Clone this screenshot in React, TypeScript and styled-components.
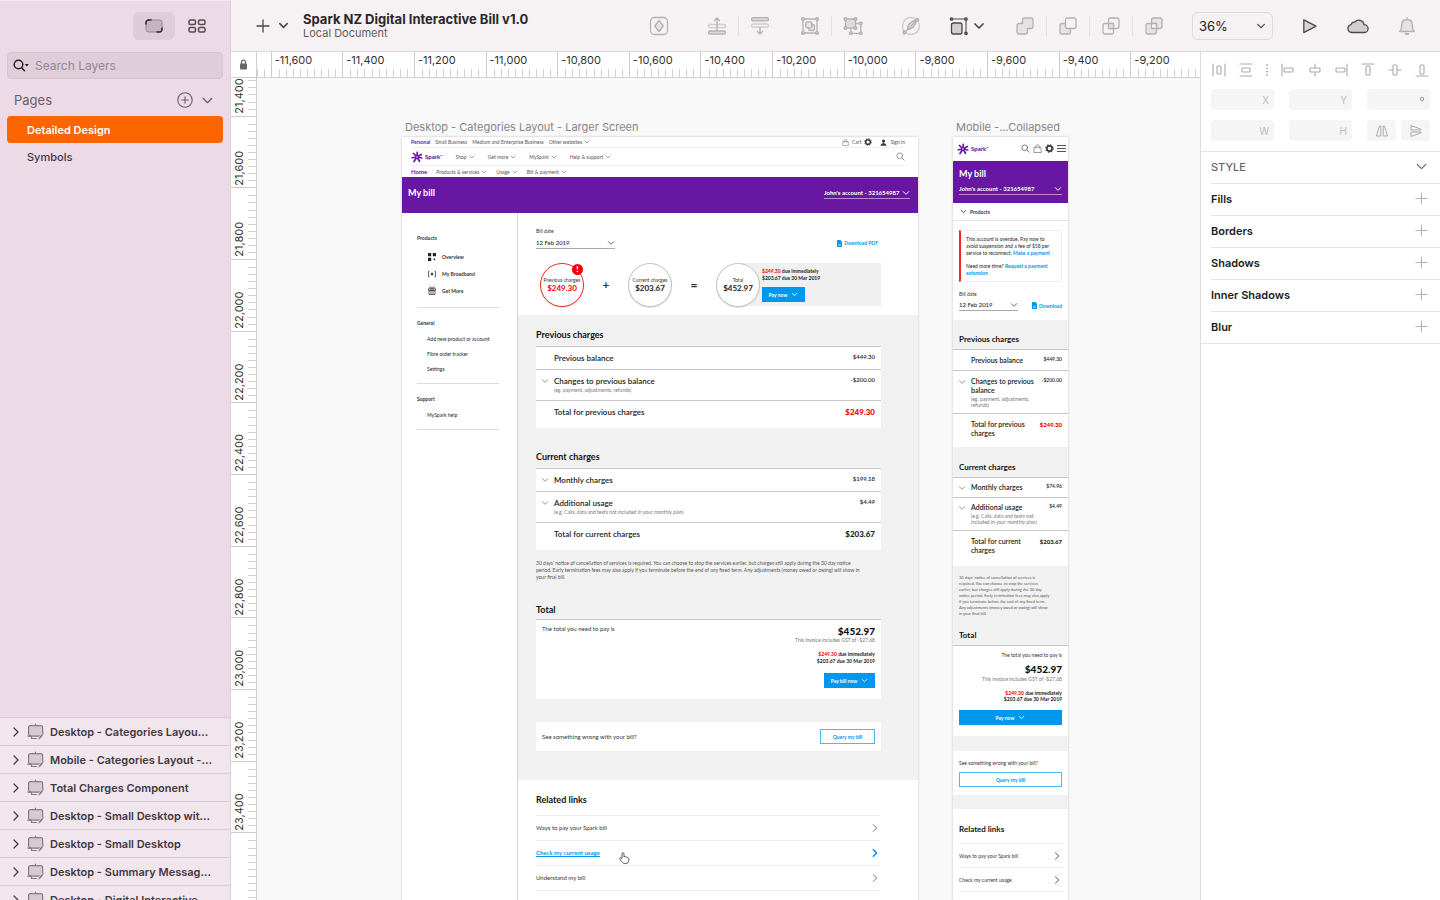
import React from 'react';
import styled, { createGlobalStyle, css } from 'styled-components';

const ui = `Inter, "Liberation Sans", sans-serif`;
const brand = `Lato, "Liberation Sans", sans-serif`;
const purple = '#6817a3';
const blue = '#0097ec';
const red = '#f40000';

const Global = createGlobalStyle`
  *, *::before, *::after { box-sizing: border-box; }
  html, body { margin: 0; height: 100%; overflow: hidden; }
  body { font-family: ${ui}; color: #2b282a; }
  h1, h2, h3, p, ul { margin: 0; padding: 0; font-weight: inherit; font-size: inherit; }
  ul { list-style: none; }
  button, input, select { font: inherit; color: inherit; background: none; border: 0; padding: 0; margin: 0; border-radius: 0; }
  select { appearance: none; }
  svg { display: block; flex: none; }
  a { color: inherit; text-decoration: none; }
`;

/* ---------- shared icons ---------- */

type ChevProps = { size?: number; dir?: 'down' | 'right'; color?: string; weight?: number };
const Chevron = ({ size = 12, dir = 'down', color = '#4a4648', weight = 1.5 }: ChevProps) => (
  <svg width={size} height={size} viewBox="0 0 12 12" fill="none" stroke={color} strokeWidth={weight} strokeLinecap="round" strokeLinejoin="round" aria-hidden="true">
    <path d={dir === 'down' ? 'M2 4l4 4 4-4' : 'M4 2l4 4-4 4'} />
  </svg>
);

const Plus = ({ size = 14, color = '#4a4648', weight = 1.3 }: { size?: number; color?: string; weight?: number }) => (
  <svg width={size} height={size} viewBox="0 0 14 14" fill="none" stroke={color} strokeWidth={weight} strokeLinecap="round" aria-hidden="true">
    <path d="M7 1v12M1 7h12" />
  </svg>
);

const Glyph = ({ children, dark }: { children: React.ReactNode; dark?: boolean }) => (
  <svg width="24" height="24" viewBox="0 0 24 24" fill="none" stroke={dark ? '#4d494b' : '#b5b0b2'} strokeWidth="1.3" strokeLinejoin="round" strokeLinecap="round" aria-hidden="true">
    {children}
  </svg>
);

const dots = (pts: number[][]) => pts.map(([x, y]) => <circle key={`${x}-${y}`} cx={x} cy={y} r="1.4" fill="#cfcacc" />);

const icons = {
  symbol: <Glyph><rect x="3.5" y="3.5" width="17" height="17" rx="4" /><path d="M12 6.5l4.3 5.5-4.3 5.5L7.7 12z" fill="#e6e1e3" /></Glyph>,
  forward: <Glyph><rect x="3.5" y="10.5" width="17" height="3.2" rx="1.6" opacity=".6" /><rect x="3.5" y="17" width="17" height="3.2" rx="1.6" fill="#dcd7d9" /><path d="M12 17V4M9.5 6.5L12 4l2.5 2.5" /></Glyph>,
  backward: <Glyph><rect x="3.5" y="3.7" width="17" height="3.2" rx="1.6" fill="#dcd7d9" /><rect x="3.5" y="10" width="17" height="3.2" rx="1.6" opacity=".6" /><path d="M12 13.500v6.500M9.5 17.5L12 20l2.5-2.5" /></Glyph>,
  group: <Glyph><path d="M5 5h14v14H5z" />{dots([[5, 5], [19, 5], [5, 19], [19, 19]])}<rect x="10.5" y="10.5" width="6" height="6" rx="1.5" fill="#e6e1e3" /><rect x="7.8" y="7.8" width="6" height="6" rx="1.5" fill="#e6e1e3" /></Glyph>,
  ungroup: <Glyph><path d="M9.8 9.5h10v9.8h-10z" />{dots([[19.8, 9.5], [9.8, 19.3], [19.8, 19.3]])}<path d="M4.5 5h10v9h-10z" fill="#dedadc" />{dots([[4.5, 5], [14.5, 5], [4.5, 14], [14.5, 14]])}</Glyph>,
  edit: <Glyph><circle cx="12" cy="12" r="8.5" opacity=".6" /><path d="M8.5 14c.5-3.500 3-6.500 9-8-1 5-3.500 8.500-8 9.500z" fill="#e6e1e3" /><path d="M5.5 18.5L18 6" /><circle cx="18.2" cy="5.8" r="1.5" fill="#cfcacc" /><circle cx="5.5" cy="18.5" r="1.5" fill="#cfcacc" /></Glyph>,
  transform: <Glyph dark><rect x="4.5" y="9" width="10.5" height="11" rx="2" fill="#d2cdcf" /><path d="M4.5 5H19v14.3" strokeWidth="1.1" /><circle cx="4.5" cy="5" r="1.2" fill="#777" /><circle cx="19" cy="5" r="1.2" fill="#777" /><circle cx="19" cy="19.3" r="1.2" fill="#777" /></Glyph>,
  union: <Glyph><path d="M11.5 4h6.5a2 2 0 012 2v6.500a2 2 0 01-2 2h-3.500V18a2 2 0 01-2 2H6a2 2 0 01-2-2v-6.500a2 2 0 012-2h3.500V6a2 2 0 012-2z" fill="#e6e1e3" /></Glyph>,
  subtract: <Glyph><path d="M9.5 9.5H6a2 2 0 00-2 2V18a2 2 0 002 2h6.500a2 2 0 002-2v-3.500" fill="#e6e1e3" /><rect x="9.5" y="4" width="10.5" height="10.5" rx="2" fill="#f6f1f3" /></Glyph>,
  intersect: <Glyph><rect x="9.5" y="4" width="10.5" height="10.5" rx="2" /><rect x="4" y="9.5" width="10.5" height="10.5" rx="2" /><path d="M9.5 9.5h5v5h-5z" fill="#e6e1e3" /></Glyph>,
  difference: <Glyph><rect x="9.5" y="4" width="10.5" height="10.5" rx="2" fill="#e6e1e3" /><rect x="4" y="9.5" width="10.5" height="10.5" rx="2" fill="#e6e1e3" /><path d="M9.5 9.5h5v5h-5z" fill="#f6f1f3" /></Glyph>,
  play: <Glyph dark><path d="M6.8 5.8v12.800L19 12.200z" fill="#d8d3d5" /></Glyph>,
  cloud: <Glyph dark><path d="M5.7 18.5a4 4 0 01-.6-7.900 3.300 3.300 0 013.700-2.500 5.200 5.200 0 019.200 2.600 3.900 3.900 0 01.4 7.800z" fill="#d2cdcf" /></Glyph>,
  bell: <Glyph><path d="M4.7 17.5c1.800-1.600 2-3.500 2-6.500 0-3.300 2-5.500 5.300-5.500s5.300 2.200 5.300 5.500c0 3 .2 4.900 2 6.500zM12 5.300V3.700" fill="#e6e1e3" /><path d="M10.7 20h2.600" strokeWidth="1.8" /></Glyph>,
};

const SparkStar = ({ size }: { size: number }) => (
  <svg width={size} height={size} viewBox="0 0 24 24" stroke={purple} strokeLinecap="round" fill="none" aria-hidden="true">
    <path d="M12 12L12.5 2.500M12 12l8.500-5M12 12l9.500 2M12 12l5 8.500M12 12l-6 9M12 12l-9.500 1.500M12 12L5 5" strokeWidth="3.4" />
    <circle cx="12" cy="12" r="1.5" stroke="none" fill="#fff" />
  </svg>
);
const SearchIcon = ({ size, color = '#777', weight = 2 }: { size: number; color?: string; weight?: number }) => (
  <svg width={size} height={size} viewBox="0 0 24 24" fill="none" stroke={color} strokeWidth={weight} strokeLinecap="round" aria-hidden="true">
    <circle cx="10" cy="10" r="7.5" /><path d="M15.5 15.5L22 22" />
  </svg>
);
const BagIcon = ({ size }: { size: number }) => (
  <svg width={size} height={size} viewBox="0 0 24 24" fill="none" stroke="#777" strokeWidth="2" aria-hidden="true">
    <path d="M3 8.5h18l1 14H2zM7.5 12V6c0-5.500 9-5.500 9 0v6" />
  </svg>
);
const GearIcon = ({ size }: { size: number }) => (
  <svg width={size} height={size} viewBox="0 0 24 24" fill="none" stroke="#3d3d3d" aria-hidden="true">
    <circle cx="12" cy="12" r="7" strokeWidth="4.5" /><circle cx="12" cy="12" r="10" strokeWidth="3" strokeDasharray="3.9 3.95" />
  </svg>
);
const UserIcon = ({ size }: { size: number }) => (
  <svg width={size} height={size} viewBox="0 0 24 24" fill="#3d3d3d" aria-hidden="true">
    <circle cx="12" cy="7" r="5.5" /><path d="M10 12h4l1 3c5 1 7 3 7 8H2c0-5 2-7 7-8z" />
  </svg>
);
const MenuIcon = () => (
  <svg width="9" height="9" viewBox="0 0 9 9" stroke="#555" strokeWidth="1.2" aria-hidden="true"><path d="M0 1.5h9M0 4.500h9M0 7.500h9" /></svg>
);
const DocIcon = () => (
  <svg width="5" height="7" viewBox="0 0 10 14" aria-hidden="true"><path d="M0 0h7l3 3.500V14H0z" fill={blue} /><path d="M2.5 8.5h5M2.5 11h5" stroke="#fff" strokeWidth="1" /></svg>
);
const OverviewIcon = () => (
  <svg width="8" height="8" viewBox="0 0 8 8" fill="#222" aria-hidden="true"><path d="M0 0h3.200v3.200H0zM4.800 0H8v3.200H4.800zM0 4.800h3.200V8H0z" /><path d="M5.5 5.5h1.600v1.600H5.500z" /></svg>
);
const BroadbandIcon = () => (
  <svg width="8" height="8" viewBox="0 0 16 16" fill="none" stroke="#333" strokeWidth="1.5" aria-hidden="true"><circle cx="8" cy="8" r="2" fill="#222" /><path d="M3 2.500H1v11h2M13 2.500h2v11h-2" /></svg>
);
const GiftIcon = () => (
  <svg width="8" height="9" viewBox="0 0 16 18" fill="none" stroke="#333" strokeWidth="1.5" aria-hidden="true"><path d="M1 5.500h14v3.500H1zM2 9h12v8H2zM6 5.500V17M10 5.500V17M8 5C6 0 2 1 4 5M8 5c2-5 6-4 4 0" /></svg>
);
const ArtboardIcon = () => (
  <svg width="18" height="18" viewBox="0 0 18 18" fill="none" stroke="#857b82" strokeWidth="1.2" strokeLinecap="round" strokeLinejoin="round" aria-hidden="true">
    <rect x="1.6" y="2.600" width="14" height="10.500" rx="2" fill="#d6c9d1" /><path d="M8.500 2.500V1M4.500 13.500v2M.8 13.200h3M4.500 15.500h5" />
    <path d="M17.500 8.500c-2.500 2-4.500 4-5.500 6l-2 2.500 3-.9c2-1.500 3.500-4 4.500-7.600z" fill="#857b82" stroke="#f2e6ee" strokeWidth=".6" />
  </svg>
);

/* ---------- application shell ---------- */

const Shell = styled.div`
  display: grid;
  grid-template-columns: 231px minmax(0, 1fr);
  grid-template-rows: minmax(0, 1fr);
  height: 100vh;
  background: #fff;
`;
const Sidebar = styled.aside`
  display: flex;
  flex-direction: column;
  min-height: 0;
  background: #ecdae6;
  border-top: 1px solid #f2e8ee;
  border-right: 1px solid #ddd0d8;
`;
const ViewSwitch = styled.div`
  display: flex;
  justify-content: flex-end;
  gap: 1px;
  padding: 11px 12px 12px 0;
`;
const ViewButton = styled.button<{ $active?: boolean }>`
  display: grid;
  place-items: center;
  width: 42px;
  height: 28px;
  border-radius: 6px;
  background: ${(p) => (p.$active ? '#dfccd9' : 'transparent')};
`;
const SearchBox = styled.label`
  display: flex;
  align-items: center;
  gap: 6px;
  height: 27px;
  margin: 0 7px;
  padding-left: 5px;
  border: 1px solid #d6c5d1;
  border-radius: 4px;
  background: #dfcdd9;
  input { flex: 1; min-width: 0; font-size: 12px; outline: 0; }
  input::placeholder { color: #968791; opacity: 1; }
`;
const PagesHead = styled.div`
  display: flex;
  align-items: center;
  height: 37px;
  padding: 5px 16px 0 14px;
  gap: 8px;
  font-size: 13px;
  color: #6b5f67;
  h2 { flex: 1; }
`;
const IconButton = styled.button`
  display: grid;
  place-items: center;
`;
const PageItem = styled.button<{ $active?: boolean }>`
  display: block;
  height: 27px;
  margin: 0 7px;
  padding-left: 20px;
  border-radius: 4px;
  text-align: left;
  font-size: 11px;
  font-weight: ${(p) => (p.$active ? 600 : 500)};
  color: ${(p) => (p.$active ? '#fff' : '#40393d')};
  background: ${(p) => (p.$active ? '#fc6500' : 'transparent')};
`;
const LayerList = styled.ul`
  flex: none;
  height: 183px;
  margin-top: auto;
  overflow: hidden;
  background: #f2e6ee;
`;
const LayerRow = styled.li`
  display: flex;
  align-items: center;
  gap: 5px;
  height: 28px;
  padding-left: 10px;
  border-top: 1px solid #d7c8d2;
  font-size: 11px;
  font-weight: 600;
  white-space: nowrap;
  color: #40393d;
`;

const Main = styled.main`
  display: grid;
  grid-template-rows: 52px minmax(0, 1fr);
  min-width: 0;
`;
const Toolbar = styled.header`
  display: flex;
  align-items: center;
  padding: 0 21px 0 25px;
  background: #f6f1f3;
  border-bottom: 1px solid #dcd7da;
`;
const AddButton = styled.button`
  display: flex;
  align-items: center;
  gap: 8px;
`;
const DocTitle = styled.div`
  flex: 1;
  min-width: 0;
  margin-left: 14px;
  white-space: nowrap;
  h1 { font-size: 13px; line-height: 16px; font-weight: 700; }
  p { font-size: 11px; line-height: 13px; color: #625d60; }
`;
const ToolGroup = styled.div<{ $before: number; $gap?: number }>`
  display: flex;
  align-items: center;
  gap: ${(p) => p.$gap ?? 9}px;
  margin-left: ${(p) => p.$before}px;
`;
const Rule = styled.span`
  width: 1px;
  height: 20px;
  background: #e3dee0;
`;
const ZoomSelect = styled.label`
  display: flex;
  align-items: center;
  width: 81px;
  height: 28px;
  margin-left: 26px;
  padding: 0 6px;
  border: 1px solid #dedadc;
  border-radius: 6px;
  font-size: 13px;
  color: #1c1a1b;
  select { flex: 1; min-width: 0; outline: 0; }
`;

const Workspace = styled.div`
  display: grid;
  grid-template-columns: minmax(0, 1fr) 240px;
  grid-template-rows: minmax(0, 1fr);
  min-height: 0;
`;
const Stage = styled.section`
  display: grid;
  grid-template-columns: 26px minmax(0, 1fr);
  grid-template-rows: 26px minmax(0, 1fr);
  min-height: 0;
`;
const Corner = styled.div`
  display: grid;
  place-items: center;
  border-right: 1px solid #cfcfcf;
  border-bottom: 1px solid #cfcfcf;
`;
const TopRuler = styled.div`
  overflow: hidden;
  border-bottom: 1px solid #cfcfcf;
`;
const TopCells = styled.div`
  display: flex;
  height: 100%;
  margin: 0 -2px 0 -58px;
`;
const TopCell = styled.div`
  display: flex;
  flex-direction: column;
  justify-content: space-between;
  flex: 1 1 0;
  min-width: 0;
  border-left: 1px solid #cbcbcb;
  font-size: 11px;
  line-height: 16px;
  color: #333;
  white-space: nowrap;
  span { padding-left: 3px; }
`;
const TopTicks = styled.div`
  display: grid;
  grid-template-columns: repeat(10, 1fr);
  height: 8px;
  i + i { border-left: 1px solid #d2d2d2; }
`;
const LeftRuler = styled.div`
  overflow: hidden;
  border-right: 1px solid #cfcfcf;
`;
const LeftCells = styled.div`
  display: flex;
  flex-direction: column;
  height: calc(100% + 38px);
  margin-top: -33px;
`;
const LeftCell = styled.div`
  display: flex;
  justify-content: space-between;
  flex: 1 1 0;
  min-height: 0;
  border-bottom: 1px solid #cbcbcb;
  font-size: 11px;
  line-height: 16px;
  color: #333;
  span { writing-mode: vertical-rl; transform: rotate(180deg); padding-top: 2px; }
`;
const LeftTicks = styled.div`
  display: grid;
  grid-template-rows: repeat(10, 1fr);
  width: 8px;
  i + i { border-top: 1px solid #d2d2d2; }
`;
const Canvas = styled.div`
  display: flex;
  align-items: flex-start;
  gap: 35px;
  min-height: 0;
  padding: 41px 0 0 145px;
  overflow: hidden;
  background: #f9f9f9;
`;
const Frame = styled.div<{ $w: number }>`
  flex: none;
  width: ${(p) => p.$w}px;
`;
const FrameLabel = styled.div`
  height: 18px;
  padding-left: 3px;
  font-size: 11px;
  line-height: 16px;
  color: #858585;
  white-space: nowrap;
`;
const Artboard = styled.article<{ $size: number }>`
  position: relative;
  background: #fff;
  box-shadow: 0 0 2px #bbb;
  font-family: ${brand};
  font-size: ${(p) => p.$size}px;
  line-height: 8px;
  color: #333;
  white-space: nowrap;
`;

/* ---------- inspector ---------- */

const Inspector = styled.aside`
  border-left: 1px solid #dcdcdc;
  background: #fff;
`;
const AlignRow = styled.div`
  display: flex;
  justify-content: space-between;
  align-items: center;
  height: 35px;
  margin-bottom: 2px;
  padding: 0 11px;
`;
const Fields = styled.div`
  display: grid;
  grid-template-columns: repeat(3, minmax(0, 1fr));
  gap: 10px 15px;
  padding: 0 10px 10px;
`;
const Field = styled.label`
  display: flex;
  align-items: center;
  height: 21px;
  padding-right: 5px;
  border-radius: 4px;
  background: #f5f5f5;
  font-size: 10px;
  color: #bdbdbd;
  input { flex: 1; min-width: 0; outline: 0; }
`;
const FlipPair = styled.div`
  display: grid;
  grid-template-columns: 1fr 1fr;
  gap: 5px;
`;
const FlipButton = styled.button`
  display: grid;
  place-items: center;
  border-radius: 4px;
  background: #f5f5f5;
`;
const StyleList = styled.div`
  border-top: 1px solid #e4e4e4;
  border-bottom: 1px solid #e4e4e4;
  padding-left: 10px;
`;
const StyleRow = styled.div<{ $head?: boolean }>`
  display: flex;
  align-items: center;
  justify-content: space-between;
  height: ${(p) => (p.$head ? 31 : 32)}px;
  padding: 0 12px 2px 0;
  border-top: ${(p) => (p.$head ? '0' : '1px solid #e4e4e4')};
  font-size: 11px;
  font-weight: ${(p) => (p.$head ? 500 : 600)};
  color: ${(p) => (p.$head ? '#666' : '#1c1c1c')};
`;

const alignGlyphs: React.ReactNode[] = [
  <><path d="M1 1v12M13 1v12" /><rect x="5" y="3" width="4" height="8" rx="1" /></>,
  <><path d="M1 1h12M1 13h12" /><rect x="3" y="5" width="8" height="4" rx="1" /></>,
  <path d="M7 2v.01M7 5.300v.01M7 8.600v.01M7 12v.01" strokeWidth="1.8" />,
  <><path d="M1 1v12" /><rect x="3" y="5" width="9" height="4" rx="1" /></>,
  <><path d="M7 1v4M7 9v4" /><rect x="2" y="5" width="10" height="4" rx="1" /></>,
  <><path d="M13 1v12" /><rect x="2" y="5" width="9" height="4" rx="1" /></>,
  <><path d="M1 1h12" /><rect x="5" y="3" width="4" height="9" rx="1" /></>,
  <><path d="M1 7h4M9 7h4" /><rect x="5" y="2" width="4" height="10" rx="1" /></>,
  <><path d="M1 13h12" /><rect x="5" y="2" width="4" height="9" rx="1" /></>,
];

const InspectorPanel = () => (
  <Inspector>
    <AlignRow>
      {alignGlyphs.map((g, i) => (
        <IconButton key={i} aria-label={`Align option ${i + 1}`}>
          <svg width={i === 2 ? 2 : 14} height="14" viewBox={i === 2 ? '6 0 2 14' : '0 0 14 14'} fill="none" stroke="#a9a9a9" strokeWidth="1.1" strokeLinecap="round">{g}</svg>
        </IconButton>
      ))}
    </AlignRow>
    <Fields>
      {['X', 'Y', '°', 'W', 'H'].map((f) => (
        <Field key={f}><input aria-label={f} />{f === '°' ? <svg width="6" height="12" viewBox="0 0 6 12" fill="none" stroke="#999"><circle cx="3" cy="5" r="1.7" /></svg> : f}</Field>
      ))}
      <FlipPair>
        <FlipButton aria-label="Flip horizontal">
          <svg width="14" height="12" viewBox="0 0 14 12" fill="none" stroke="#aaa" strokeLinejoin="round"><path d="M5.8 1v10H1.500L4.500 1zM8.200 1v10h4.300L9.500 1z" /></svg>
        </FlipButton>
        <FlipButton aria-label="Flip vertical">
          <svg width="14" height="14" viewBox="0 0 14 14" fill="none" stroke="#aaa" strokeLinejoin="round"><path d="M2 6V1.500L12 5.200V6zM2 8v4.500l10-3.700V8z" /></svg>
        </FlipButton>
      </FlipPair>
    </Fields>
    <StyleList>
      <StyleRow $head><h2>STYLE</h2><Chevron size={13} color="#666" weight={1.1} /></StyleRow>
      {['Fills', 'Borders', 'Shadows', 'Inner Shadows', 'Blur'].map((s) => (
        <StyleRow key={s}>{s}<IconButton aria-label={`Add ${s}`}><Plus size={13} color="#b0b0b0" weight={1.1} /></IconButton></StyleRow>
      ))}
    </StyleList>
  </Inspector>
);

/* ---------- bill pages: shared parts ---------- */

const Heading = styled.h2<{ $gap: number; $before?: number; $m?: boolean }>`
  margin: ${(p) => p.$before ?? 0}px 0 ${(p) => p.$gap}px ${(p) => (p.$m ? 6 : 0)}px;
  font-size: ${(p) => (p.$m ? 8 : 9)}px;
  line-height: 10px;
  font-weight: 700;
  color: #111;
`;
const ChargeTable = styled.table<{ $m?: boolean; $tight?: boolean }>`
  width: 100%;
  border-spacing: 0;
  background: #fff;
  white-space: normal;
  color: #222;
  th, td { padding: ${(p) => (p.$tight ? 5 : 6)}px 0 ${(p) => (p.$m ? 5 : 6)}px; border-top: 1px solid #c6c6c6; vertical-align: top; text-align: left; }
  td:first-child { width: 18px; padding-left: 5px; padding-top: ${(p) => (p.$tight ? 6 : 7)}px; }
  th { font-size: ${(p) => (p.$m ? 7 : 8)}px; line-height: ${(p) => (p.$m ? 9 : 10)}px; font-weight: 600; }
  td:last-child { padding-right: 6px; text-align: right; font-size: ${(p) => (p.$m ? 5 : 6)}px; line-height: 7px; font-weight: 600; white-space: nowrap; }
  tr:last-child > * { padding-top: 6px; padding-bottom: ${(p) => (p.$m && !p.$tight ? 9 : 11)}px; }
  tr:last-child > td:last-child { font-size: ${(p) => (p.$m ? 6 : 8)}px; line-height: ${(p) => (p.$m ? 9 : 10)}px; font-weight: 900; }
`;
const Hint = styled.small<{ $m?: boolean }>`
  display: block;
  font-size: 5px;
  font-weight: 400;
  line-height: ${(p) => (p.$m ? 6 : 8)}px;
  margin-top: ${(p) => (p.$m ? 1 : 0)}px;
  color: #777;
  white-space: nowrap;
`;
const Red = styled.span`
  color: ${red};
`;
const Notice = styled.p<{ $m?: boolean }>`
  margin: ${(p) => (p.$m ? '9px 4px 13px 6px' : '10px 0 24px')};
  font-size: ${(p) => (p.$m ? 4 : 5)}px;
  line-height: ${(p) => (p.$m ? 6 : 7)}px;
  color: #555;
`;
const BlueButton = styled.button<{ $w?: number }>`
  display: flex;
  align-items: center;
  justify-content: center;
  gap: 4px;
  width: ${(p) => (p.$w ? `${p.$w}px` : '100%')};
  height: 15px;
  font-size: 5px;
  font-weight: 700;
  color: #fff;
  background: ${blue};
`;
const OutlineButton = styled.button<{ $w?: number }>`
  display: block;
  width: ${(p) => (p.$w ? `${p.$w}px` : '100%')};
  height: 15px;
  border: 1px solid #4fb8f2;
  font-size: 5px;
  line-height: 8px;
  font-weight: 700;
  color: ${blue};
`;
const BigTotal = styled.strong`
  display: block;
  font-size: 10px;
  line-height: 12px;
  font-weight: 900;
  color: #111;
`;
const Gst = styled.div<{ $gap: number }>`
  margin-top: ${(p) => p.$gap}px;
  font-size: 5px;
  line-height: 6px;
  color: #777;
`;
const DueLines = styled.div<{ $lh: number }>`
  font-size: 5px;
  line-height: ${(p) => p.$lh}px;
  font-weight: 700;
  color: #222;
`;
const LinkRow = styled.a<{ $h: number; $active?: boolean }>`
  display: flex;
  align-items: center;
  justify-content: space-between;
  height: ${(p) => p.$h}px;
  border-top: 1px solid #ececec;
  ${(p) => p.$active && css`
    color: ${blue};
    font-weight: 700;
    span { text-decoration: underline; }
  `}
`;
const Logo = styled.div`
  display: flex;
  align-items: center;
  font-size: 6px;
  font-weight: 900;
  color: ${purple};
  svg { margin-right: 2px; }
  small { font-size: 3px; line-height: 4px; align-self: flex-start; padding-top: 3px; }
`;
const SparkLogo = () => <Logo><SparkStar size={12} />Spark<small>™</small></Logo>;

type Charge = { label: string; amount: string; hint?: string[]; open?: boolean };
type ChargesProps = { rows: Charge[]; mobile?: boolean; tight?: boolean; overdue?: boolean };
const Charges = ({ rows, mobile, tight, overdue }: ChargesProps) => (
  <ChargeTable $m={mobile} $tight={tight}>
    <tbody>
      {rows.map((r, i) => (
        <tr key={r.label}>
          <td>{r.open && <Chevron size={8} color="#777" weight={1.2} />}</td>
          <th scope="row">
            {r.label}
            {r.hint && <Hint $m={mobile}>{mobile ? <>{r.hint[0]}<br />{r.hint[1]}</> : r.hint.join(' ')}</Hint>}
          </th>
          <td>{overdue && i === rows.length - 1 ? <Red>{r.amount}</Red> : r.amount}</td>
        </tr>
      ))}
    </tbody>
  </ChargeTable>
);

const previous: Charge[] = [
  { label: 'Previous balance', amount: '$449.30' },
  { label: 'Changes to previous balance', amount: '-$200.00', hint: ['(eg. payment, adjustments,', 'refunds)'], open: true },
  { label: 'Total for previous charges', amount: '$249.30' },
];
const current = (monthly: string): Charge[] => [
  { label: 'Monthly charges', amount: monthly, open: true },
  { label: 'Additional usage', amount: '$4.49', hint: ['(e.g. Calls, data and texts not', 'included in your monthly plan)'], open: true },
  { label: 'Total for current charges', amount: '$203.67' },
];

/* ---------- desktop bill ---------- */

const NavRow = styled.nav<{ $h: number; $line?: boolean; $gap: number }>`
  display: flex;
  align-items: center;
  gap: ${(p) => p.$gap}px;
  height: ${(p) => p.$h}px;
  margin: 0 13px 0 9px;
  border-bottom: ${(p) => (p.$line ? '1px solid #f0f0f0' : '0')};
  font-size: 5px;
  color: #555;
`;
const NavLink = styled.a<{ $on?: boolean; $size?: number }>`
  display: flex;
  align-items: center;
  gap: 2px;
  font-size: ${(p) => p.$size ?? 5}px;
  ${(p) => p.$on && css`
    font-weight: 700;
    color: ${purple};
  `}
`;
const NavEnd = styled.div`
  display: flex;
  align-items: center;
  gap: 8px;
  margin-left: auto;
`;
const NavTool = styled.a`
  display: flex;
  align-items: center;
  gap: 3px;
`;
const BillBanner = styled.div`
  display: flex;
  align-items: center;
  justify-content: space-between;
  height: 36px;
  padding: 0 8px 4px 6px;
  color: #fff;
  background: ${purple};
`;
const BannerTitle = styled.h1`
  font-size: 9px;
  line-height: 10px;
  font-weight: 700;
`;
const LineSelect = styled.label<{ $w: number; $line: string; $bold?: boolean; $h: number }>`
  display: flex;
  align-items: center;
  width: ${(p) => p.$w}px;
  height: ${(p) => p.$h}px;
  border-bottom: 1px solid ${(p) => p.$line};
  font-size: 6px;
  line-height: 10px;
  font-weight: ${(p) => (p.$bold ? 700 : 600)};
  select { flex: 1; min-width: 0; outline: 0; line-height: 10px; }
`;
const BillBody = styled.div`
  display: grid;
  grid-template-columns: 116px minmax(0, 1fr);
`;
const SideNav = styled.nav`
  padding: 21px 18px 0 15px;
  border-right: 1px solid #d4d4d4;
`;
const SideGroup = styled.section`
  padding-bottom: 7px;
  margin-bottom: 11px;
  border-bottom: 1px solid #dcdcdc;
  h3 { font-size: 5px; line-height: 8px; font-weight: 700; }
`;
const SideLink = styled.a<{ $icon?: boolean }>`
  display: flex;
  align-items: center;
  gap: 6px;
  height: ${(p) => (p.$icon ? 17 : 15)}px;
  padding-left: ${(p) => (p.$icon ? 11 : 10)}px;
  font-size: 5px;
  font-weight: ${(p) => (p.$icon ? 700 : 500)};
  &:nth-child(2) { margin-top: ${(p) => (p.$icon ? 6 : 4)}px; }
  &:last-child { margin-bottom: ${(p) => (p.$icon ? 1 : 0)}px; }
`;
const Summary = styled.section`
  height: 102px;
  padding: 14px 37px 0 18px;
`;
const DateRow = styled.div<{ $end?: number }>`
  display: flex;
  align-items: center;
  justify-content: space-between;
  margin: 2px 0 14px;
  padding-right: ${(p) => p.$end ?? 0}px;
`;
const SmallLabel = styled.div<{ $lh: number }>`
  font-size: 5px;
  line-height: ${(p) => p.$lh}px;
`;
const Download = styled.a`
  display: flex;
  align-items: center;
  gap: 2px;
  font-size: 5px;
  font-weight: 700;
  color: ${blue};
`;
const Sum = styled.div`
  display: flex;
  padding-left: 4px;
`;
const Circle = styled.div<{ $alert?: boolean }>`
  position: relative;
  z-index: 1;
  display: flex;
  flex-direction: column;
  align-items: center;
  justify-content: center;
  flex: none;
  width: 44px;
  height: 44px;
  border: 1px solid ${(p) => (p.$alert ? '#f02a22' : '#c2c2c2')};
  border-radius: 50%;
  background: #fff;
  box-shadow: 0 1px 1px #ddd;
  font-size: 5px;
  line-height: 7px;
  strong { font-size: 8px; line-height: 9px; color: ${(p) => (p.$alert ? red : '#222')}; }
`;
const Badge = styled.span`
  position: absolute;
  top: 0;
  right: 0;
  width: 11px;
  height: 11px;
  border-radius: 50%;
  background: ${red};
  color: #fff;
  font-size: 8px;
  line-height: 11px;
  font-weight: 900;
  text-align: center;
`;
const Operator = styled.span`
  flex: none;
  width: 44px;
  font-size: 12px;
  line-height: 44px;
  font-weight: 700;
  text-align: center;
`;
const DuePanel = styled.div`
  flex: 1;
  height: 43px;
  margin-left: -22px;
  padding: 5px 0 0 24px;
  background: #f0f0f0;
  button { margin-top: 5px; }
`;
const GreySection = styled.section<{ $m?: boolean }>`
  padding: ${(p) => (p.$m ? '14px 0 0' : '15px 37px 29px 18px')};
  background: #f1f1f1;
`;
const TotalPanel = styled.div`
  display: flex;
  justify-content: space-between;
  height: 80px;
  padding: 5px 6px 0;
  border-top: 1px solid #c6c6c6;
  background: #fff;
`;
const TotalSide = styled.div`
  display: flex;
  flex-direction: column;
  align-items: flex-end;
  text-align: right;
  gap: 8px;
`;
const QueryPanel = styled.div`
  display: flex;
  align-items: center;
  justify-content: space-between;
  height: 29px;
  margin-top: 23px;
  padding: 0 6px;
  background: #fff;
`;
const Related = styled.section<{ $m?: boolean }>`
  padding: ${(p) => (p.$m ? '15px 6px 20px' : '15px 38px 20px 18px')};
  h2 { margin-left: 0; }
`;
const Cursor = styled.svg`
  position: absolute;
  left: 217px;
  top: 715px;
`;

const NavItem = ({ children, chev }: { children: string; chev?: boolean }) => (
  <NavLink href="#">{children}{chev && <Chevron size={6} color="#777" weight={1.3} />}</NavLink>
);

const DesktopBill = () => (
  <Artboard $size={6}>
    <NavRow $h={11} $line $gap={5}>
      <NavLink href="#" $on>Personal</NavLink>
      <NavItem>Small Business</NavItem>
      <NavItem>Medium and Enterprise Business</NavItem>
      <NavItem chev>Other websites</NavItem>
      <NavEnd>
        <NavTool href="#"><BagIcon size={7} />Cart<GearIcon size={8} /></NavTool>
        <NavTool href="#"><UserIcon size={7} />Sign in</NavTool>
      </NavEnd>
    </NavRow>
    <NavRow $h={18} $line $gap={13}>
      <SparkLogo />
      <NavItem chev>Shop</NavItem>
      <NavItem chev>Get more</NavItem>
      <NavItem chev>MySpark</NavItem>
      <NavItem chev>{'Help & support'}</NavItem>
      <NavEnd><SearchIcon size={9} /></NavEnd>
    </NavRow>
    <NavRow $h={11} $gap={9}>
      <NavLink href="#" $on $size={6}>Home</NavLink>
      <NavItem chev>{'Products & services'}</NavItem>
      <NavItem chev>Usage</NavItem>
      <NavItem chev>{'Bill & payment'}</NavItem>
    </NavRow>
    <BillBanner>
      <BannerTitle>My bill</BannerTitle>
      <LineSelect $w={86} $h={12} $line="#b68fd2" $bold>
        <select aria-label="Account"><option>John's account - 321654987</option></select>
        <Chevron size={8} color="#fff" />
      </LineSelect>
    </BillBanner>
    <BillBody>
      <SideNav>
        <SideGroup>
          <h3>Products</h3>
          <SideLink href="#" $icon><OverviewIcon />Overview</SideLink>
          <SideLink href="#" $icon><BroadbandIcon />My Broadband</SideLink>
          <SideLink href="#" $icon><GiftIcon />Get More</SideLink>
        </SideGroup>
        <SideGroup>
          <h3>General</h3>
          <SideLink href="#">Add new product or account</SideLink>
          <SideLink href="#">Fibre order tracker</SideLink>
          <SideLink href="#">Settings</SideLink>
        </SideGroup>
        <SideGroup>
          <h3>Support</h3>
          <SideLink href="#">MySpark help</SideLink>
        </SideGroup>
      </SideNav>
      <div>
        <Summary>
          <SmallLabel $lh={8}>Bill date</SmallLabel>
          <DateRow $end={3}>
            <LineSelect $w={79} $h={12} $line="#aaa">
              <select aria-label="Bill date"><option>12 Feb 2019</option></select>
              <Chevron size={8} color="#555" weight={1.3} />
            </LineSelect>
            <Download href="#"><DocIcon />Download PDF</Download>
          </DateRow>
          <Sum>
            <Circle $alert>Previous charges<strong>$249.30</strong><Badge>!</Badge></Circle>
            <Operator>+</Operator>
            <Circle>Current charges<strong>$203.67</strong></Circle>
            <Operator>=</Operator>
            <Circle>Total<strong>$452.97</strong></Circle>
            <DuePanel>
              <DueLines $lh={7}><Red>$249.30</Red> due immediately<br />$203.67 due 30 Mar 2019</DueLines>
              <BlueButton $w={43}>Pay now<Chevron size={7} color="#fff" /></BlueButton>
            </DuePanel>
          </Sum>
        </Summary>
        <GreySection>
          <Heading $gap={6}>Previous charges</Heading>
          <Charges rows={previous} overdue />
          <Heading $before={24} $gap={6}>Current charges</Heading>
          <Charges rows={current('$199.18')} />
          <Notice>
            30 days' notice of cancellation of services is required. You can choose to stop the services earlier, but charges still apply during the 30 day notice<br />
            period. Early termination fees may also apply if you terminate before the end of any fixed term. Any adjustments (money owed or owing) will show in<br />
            your final bill.
          </Notice>
          <Heading $gap={4}>Total</Heading>
          <TotalPanel>
            <span>The total you need to pay is</span>
            <TotalSide>
              <div><BigTotal>$452.97</BigTotal><Gst $gap={0}>This invoice includes GST of -$27.68</Gst></div>
              <DueLines $lh={7}><Red>$249.30</Red> due immediately<br />$203.67 due 30 Mar 2019</DueLines>
              <BlueButton $w={51}>Pay bill now<Chevron size={7} color="#fff" /></BlueButton>
            </TotalSide>
          </TotalPanel>
          <QueryPanel><span>See something wrong with your bill?</span><OutlineButton $w={55}>Query my bill</OutlineButton></QueryPanel>
        </GreySection>
        <Related>
          <Heading $gap={10}>Related links</Heading>
          <LinkRow href="#" $h={25}><span>Ways to pay your Spark bill</span><Chevron size={10} dir="right" color="#777" weight={1.2} /></LinkRow>
          <LinkRow href="#" $h={25} $active><span>Check my current usage</span><Chevron size={10} dir="right" color={blue} weight={1.8} /></LinkRow>
          <LinkRow href="#" $h={25}><span>Understand my bill</span><Chevron size={10} dir="right" color="#777" weight={1.2} /></LinkRow>
          <LinkRow href="#" $h={25} aria-label="More links" />
        </Related>
      </div>
    </BillBody>
    <Cursor width="11" height="12" viewBox="0 0 22 24" fill="#fff" stroke="#333" strokeWidth="1.6" strokeLinejoin="round" aria-hidden="true">
      <path d="M6 13V3.500a2 2 0 014 0V10l1-.8c1-.5 2.300 0 2.500 1 1.500-.7 2.800 0 3 1.200 1.600-.5 3 .3 3 2V17c0 3.500-2 6-6 6h-2c-3 0-4.500-1.500-6-4l-4-5c-1-2 1-3.500 2.500-2.200z" />
    </Cursor>
  </Artboard>
);

/* ---------- mobile bill ---------- */

const MobileHead = styled.header`
  display: flex;
  align-items: center;
  justify-content: space-between;
  height: 24px;
  padding: 0 2px 1px 4px;
`;
const HeadTools = styled.div`
  display: flex;
  gap: 3px;
`;
const MobileBanner = styled.div`
  height: 42px;
  padding: 8px 6px;
  color: #fff;
  background: ${purple};
  label { margin-top: 5px; }
`;
const ProductsToggle = styled.button`
  display: flex;
  align-items: center;
  gap: 3px;
  width: 100%;
  height: 18px;
  padding-left: 7px;
  border-bottom: 1px solid #e6e6e6;
  font-size: 5px;
  font-weight: 700;
`;
const Alert = styled.div`
  margin: 9px 6px 9px;
  padding: 5px 0 4px 5px;
  border: 1px solid #eee;
  border-left: 2px solid #f02a22;
  font-size: 5px;
  line-height: 7px;
  font-weight: 500;
  p + p { margin-top: 6px; }
  a { color: ${blue}; font-weight: 700; }
`;
const MobileDate = styled.div`
  padding: 0 6px 9px;
  > div + div { margin: 3px 0 0; }
`;
const MobilePanel = styled.div<{ $lined?: boolean }>`
  padding: ${(p) => (p.$lined ? '5px 6px 11px' : '8px 6px')};
  border-top: ${(p) => (p.$lined ? '1px solid #c6c6c6' : '0')};
  text-align: ${(p) => (p.$lined ? 'right' : 'left')};
  background: #fff;
  strong { margin-top: 4px; }
  button { margin-top: ${(p) => (p.$lined ? 8 : 5)}px; }
`;
const PanelDue = styled.div`
  margin-top: 8px;
`;
const Band = styled.div<{ $h: number }>`
  height: ${(p) => p.$h}px;
  background: #f1f1f1;
`;

const MobileBill = () => (
  <Artboard $size={5}>
    <MobileHead>
      <SparkLogo />
      <HeadTools><SearchIcon size={9} color="#555" /><BagIcon size={9} /><GearIcon size={9} /><MenuIcon /></HeadTools>
    </MobileHead>
    <MobileBanner>
      <BannerTitle>My bill</BannerTitle>
      <LineSelect $w={103} $h={11} $line="#b68fd2" $bold>
        <select aria-label="Account"><option>John's account - 321654987</option></select>
        <Chevron size={8} color="#fff" />
      </LineSelect>
    </MobileBanner>
    <ProductsToggle><Chevron size={7} color="#333" />Products</ProductsToggle>
    <Alert>
      <p>This account is overdue. Pay now to<br />avoid suspension and a fee of $58 per<br />service to reconnect. <a href="#">Make a payment</a></p>
      <p>Need more time? <a href="#">Request a payment<br />extension</a></p>
    </Alert>
    <MobileDate>
      <SmallLabel $lh={6}>Bill date</SmallLabel>
      <DateRow>
        <LineSelect $w={59} $h={11} $line="#aaa">
          <select aria-label="Bill date"><option>12 Feb 2019</option></select>
          <Chevron size={8} color="#555" weight={1.3} />
        </LineSelect>
        <Download href="#"><DocIcon />Download</Download>
      </DateRow>
    </MobileDate>
    <GreySection $m>
      <Heading $m $gap={5}>Previous charges</Heading>
      <Charges rows={previous} mobile overdue />
      <Heading $m $before={15} $gap={5}>Current charges</Heading>
      <Charges rows={current('$74.96')} mobile tight />
      <Notice $m>
        30 days' notice of cancellation of services is<br />
        required. You can choose to stop the services<br />
        earlier, but charges still apply during the 30 day<br />
        notice period. Early termination fees may also apply<br />
        if you terminate before the end of any fixed term.<br />
        Any adjustments (money owed or owing) will show<br />
        in your final bill.
      </Notice>
      <Heading $m $gap={5}>Total</Heading>
      <MobilePanel $lined>
        The total you need to pay is
        <BigTotal>$452.97</BigTotal>
        <Gst $gap={1}>This invoice includes GST of -$27.68</Gst>
        <PanelDue><DueLines $lh={6}><Red>$249.30</Red> due immediately<br />$203.67 due 30 Mar 2019</DueLines></PanelDue>
        <BlueButton>Pay now<Chevron size={7} color="#fff" /></BlueButton>
      </MobilePanel>
      <Band $h={15} />
      <MobilePanel>
        See something wrong with your bill?
        <OutlineButton>Query my bill</OutlineButton>
      </MobilePanel>
      <Band $h={14} />
    </GreySection>
    <Related $m>
      <Heading $m $gap={9}>Related links</Heading>
      <LinkRow href="#" $h={24}><span>Ways to pay your Spark bill</span><Chevron size={10} dir="right" color="#555" weight={1.2} /></LinkRow>
      <LinkRow href="#" $h={24}><span>Check my current usage</span><Chevron size={10} dir="right" color="#555" weight={1.2} /></LinkRow>
      <LinkRow href="#" $h={24} aria-label="More links" />
    </Related>
  </Artboard>
);

/* ---------- page ---------- */

const layers = [
  'Desktop - Categories Layou...',
  'Mobile - Categories Layout -...',
  'Total Charges Component',
  'Desktop - Small Desktop wit...',
  'Desktop - Small Desktop',
  'Desktop - Summary Messag...',
  'Desktop - Digital Interactive...',
];
const topMarks = ['', '-11,600', '-11,400', '-11,200', '-11,000', '-10,800', '-10,600', '-10,400', '-10,200', '-10,000', '-9,800', '-9,600', '-9,400', '-9,200'];
const leftMarks = ['21,400', '21,600', '21,800', '22,000', '22,200', '22,400', '22,600', '22,800', '23,000', '23,200', '23,400', ''];
const ticks = Array.from({ length: 10 }, (_, i) => <i key={i} />);

const Tool = ({ name }: { name: keyof typeof icons }) => <IconButton aria-label={name}>{icons[name]}</IconButton>;

export default function App() {
  return (
    <Shell>
      <Global />
      <Sidebar>
        <ViewSwitch>
          <ViewButton $active aria-label="Canvas view">
            <svg width="18" height="14" viewBox="0 0 18 14" fill="none" strokeWidth="1.5" strokeLinecap="round">
              <rect x="1" y="1" width="16" height="12" rx="2.5" fill="#c6b5c0" stroke="#948590" strokeWidth="1" />
              <path d="M1 5V3.500A2.500 2.500 0 013.500 1H6M17 9v1.500a2.500 2.500 0 01-2.500 2.500H12" stroke="#2e282c" />
            </svg>
          </ViewButton>
          <ViewButton aria-label="Components view">
            <svg width="18" height="14" viewBox="0 0 18 14" fill="none" stroke="#554a51" strokeWidth="1.5">
              <rect x="1" y="1" width="6.5" height="4.500" rx="1.5" /><rect x="10.5" y="1" width="6.5" height="4.500" rx="1.5" />
              <rect x="1" y="8.5" width="6.5" height="4.500" rx="1.5" /><rect x="10.5" y="8.5" width="6.5" height="4.500" rx="1.5" />
            </svg>
          </ViewButton>
        </ViewSwitch>
        <SearchBox>
          <svg width="16" height="13" viewBox="0 0 16 13" fill="none" stroke="#221e20" strokeWidth="1.5" strokeLinecap="round" aria-hidden="true">
            <circle cx="5.5" cy="5.5" r="4.3" /><path d="M8.7 8.7l2.800 3" /><path d="M11.8 5h4l-2 2.500z" fill="#221e20" stroke="none" />
          </svg>
          <input type="search" placeholder="Search Layers" aria-label="Search Layers" />
        </SearchBox>
        <PagesHead>
          <h2>Pages</h2>
          <IconButton aria-label="Add page">
            <svg width="16" height="16" viewBox="0 0 16 16" fill="none" stroke="#6b5f67" strokeWidth="1.1" strokeLinecap="round"><circle cx="8" cy="8" r="7.2" /><path d="M8 4.800v6.400M4.800 8h6.400" /></svg>
          </IconButton>
          <IconButton aria-label="Collapse pages"><Chevron size={13} color="#6b5f67" weight={1.2} /></IconButton>
        </PagesHead>
        <PageItem $active>Detailed Design</PageItem>
        <PageItem>Symbols</PageItem>
        <LayerList>
          {layers.map((l) => (
            <LayerRow key={l}><Chevron size={12} dir="right" weight={1.4} /><ArtboardIcon />{l}</LayerRow>
          ))}
        </LayerList>
      </Sidebar>
      <Main>
        <Toolbar>
          <AddButton aria-label="Insert"><Plus size={14} /><Chevron size={11} weight={1.7} /></AddButton>
          <DocTitle>
            <h1>Spark NZ Digital Interactive Bill v1.0</h1>
            <p>Local Document</p>
          </DocTitle>
          <Tool name="symbol" />
          <ToolGroup $before={34}><Tool name="forward" /><Rule /><Tool name="backward" /></ToolGroup>
          <ToolGroup $before={26}><Tool name="group" /><Rule /><Tool name="ungroup" /></ToolGroup>
          <ToolGroup $before={34}><Tool name="edit" /></ToolGroup>
          <ToolGroup $before={24} $gap={2}><Tool name="transform" /><Chevron size={12} weight={1.7} /></ToolGroup>
          <ToolGroup $before={28}>
            <Tool name="union" /><Rule /><Tool name="subtract" /><Rule /><Tool name="intersect" /><Rule /><Tool name="difference" />
          </ToolGroup>
          <ZoomSelect>
            <select aria-label="Zoom"><option>36%</option></select>
            <Chevron size={10} weight={1.5} />
          </ZoomSelect>
          <ToolGroup $before={24} $gap={25}><Tool name="play" /><Tool name="cloud" /><Tool name="bell" /></ToolGroup>
        </Toolbar>
        <Workspace>
          <Stage>
            <Corner>
              <svg width="9" height="11" viewBox="0 0 9 11" aria-hidden="true"><rect x="1" y="4.500" width="7" height="6" rx="1" fill="#666" /><path d="M2.5 5V3.200a2 2 0 014 0V5" fill="none" stroke="#666" strokeWidth="1.2" /></svg>
            </Corner>
            <TopRuler>
              <TopCells>
                {topMarks.map((m, i) => <TopCell key={i}><span>{m}</span><TopTicks>{ticks}</TopTicks></TopCell>)}
              </TopCells>
            </TopRuler>
            <LeftRuler>
              <LeftCells>
                {leftMarks.map((m, i) => <LeftCell key={i}><span>{m}</span><LeftTicks>{ticks}</LeftTicks></LeftCell>)}
              </LeftCells>
            </LeftRuler>
            <Canvas>
              <Frame $w={516}><FrameLabel>Desktop - Categories Layout - Larger Screen</FrameLabel><DesktopBill /></Frame>
              <Frame $w={115}><FrameLabel>Mobile -...Collapsed</FrameLabel><MobileBill /></Frame>
            </Canvas>
          </Stage>
          <InspectorPanel />
        </Workspace>
      </Main>
    </Shell>
  );
}
